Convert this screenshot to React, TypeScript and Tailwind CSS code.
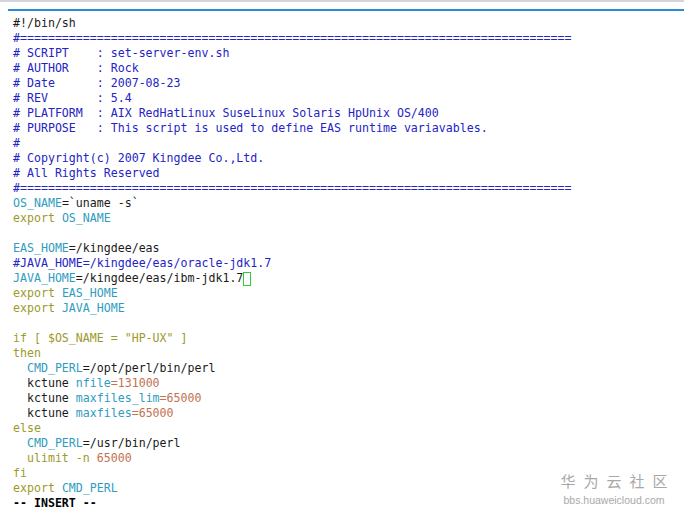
import React from "react";

const C = "text-[#2424c4]"; // comment
const I = "text-[#2f9cbf]"; // identifier
const K = "text-[#9c9a2c]"; // keyword
const N = "text-[#c27350]"; // number
const T = "text-[#1a1a1a]"; // normal

type Seg = [string, string];
const S = (cls: string, t: string): Seg => [cls, t];

const eq = "#" + "=".repeat(79);

const lines: Seg[][] = [
  [S(T, "#!/bin/sh")],
  [S(C, eq)],
  [S(C, "# SCRIPT    : set-server-env.sh")],
  [S(C, "# AUTHOR    : Rock")],
  [S(C, "# Date      : 2007-08-23")],
  [S(C, "# REV       : 5.4")],
  [S(C, "# PLATFORM  : AIX RedHatLinux SuseLinux Solaris HpUnix OS/400")],
  [S(C, "# PURPOSE   : This script is used to define EAS runtime variavables.")],
  [S(C, "#")],
  [S(C, "# Copyright(c) 2007 Kingdee Co.,Ltd.")],
  [S(C, "# All Rights Reserved")],
  [S(C, eq)],
  [S(I, "OS_NAME"), S(T, "=`uname -s`")],
  [S(K, "export "), S(I, "OS_NAME")],
  [],
  [S(I, "EAS_HOME"), S(T, "=/kingdee/eas")],
  [S(C, "#JAVA_HOME=/kingdee/eas/oracle-jdk1.7")],
  [S(I, "JAVA_HOME"), S(T, "=/kingdee/eas/ibm-jdk1.7"), S("cursor", "")],
  [S(K, "export "), S(I, "EAS_HOME")],
  [S(K, "export "), S(I, "JAVA_HOME")],
  [],
  [S(K, 'if [ $OS_NAME = "HP-UX" ]')],
  [S(K, "then")],
  [S(T, "  "), S(I, "CMD_PERL"), S(T, "=/opt/perl/bin/perl")],
  [S(T, "  kctune "), S(I, "nfile"), S(N, "=131000")],
  [S(T, "  kctune "), S(I, "maxfiles_lim"), S(N, "=65000")],
  [S(T, "  kctune "), S(I, "maxfiles"), S(N, "=65000")],
  [S(K, "else")],
  [S(T, "  "), S(I, "CMD_PERL"), S(T, "=/usr/bin/perl")],
  [S(K, "  ulimit -n "), S(N, "65000")],
  [S(K, "fi")],
  [S(K, "export "), S(I, "CMD_PERL")],
  [S("font-bold text-black", "-- INSERT --")],
];

export default function App() {
  return (
    <div className="relative w-[684px] h-[512px] bg-white overflow-hidden">
      <div className="h-[2px] bg-[#d4d4dc]" />
      <div className="ml-[8px] mt-[7px] h-[2px] bg-[#2a8cd4]" />
      <div
        className="pt-[5px] pl-[13px] whitespace-pre text-[11.6px] leading-[15px]"
        style={{ fontFamily: '"DejaVu Sans Mono", monospace' }}
      >
        {lines.map((segs, i) => (
          <div key={i} className="h-[15px] flex items-center">
            {segs.map(([cls, t], j) =>
              cls === "cursor" ? (
                <span
                  key={j}
                  className="inline-block w-[8px] h-[14px] border-[1px] border-solid border-[#33cc33] bg-transparent"
                />
              ) : (
                <span key={j} className={cls}>
                  {t}
                </span>
              )
            )}
          </div>
        ))}
      </div>
      <div
        className="absolute left-[552px] top-[472px] w-[124px] flex flex-col items-center text-[#a8a8a8] whitespace-nowrap"
        style={{ fontFamily: '"Noto Sans CJK SC", sans-serif' }}
      >
        <div className="text-[15px] leading-[18px] tracking-[8px] pl-[8px]">华为云社区</div>
        <div
          className="text-[10.5px] leading-[14px] mt-[3px]"
          style={{ fontFamily: '"Liberation Sans", sans-serif' }}
        >
          bbs.huaweicloud.com
        </div>
      </div>
    </div>
  );
}
